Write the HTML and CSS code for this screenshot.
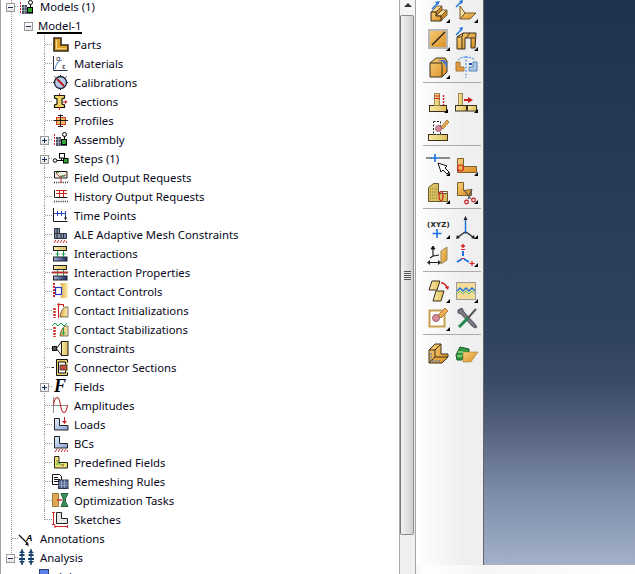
FILE: index.html
```html
<!DOCTYPE html>
<html lang="en">
<head>
<meta charset="utf-8">
<title>Model tree</title>
<link rel="stylesheet" href="styles.css">
</head>
<body>
<svg class="defs" aria-hidden="true">
<defs>
<linearGradient id="gold" x1="0" y1="0" x2="1" y2="1"><stop offset="0" stop-color="#f7cf7a"/><stop offset="1" stop-color="#d98c20"/></linearGradient>
<linearGradient id="yel" x1="0" y1="0" x2="1" y2="0"><stop offset="0" stop-color="#f8e9a8"/><stop offset="1" stop-color="#e0bf58"/></linearGradient>
<linearGradient id="fade" x1="0" y1="0" x2="1" y2="0"><stop offset="0" stop-color="#e0a83a"/><stop offset="1" stop-color="#fbefb8"/></linearGradient>
<linearGradient id="blu" x1="0" y1="0" x2="1" y2="1"><stop offset="0" stop-color="#e6eefa"/><stop offset="1" stop-color="#86a2d6"/></linearGradient>
<linearGradient id="navy" x1="0" y1="0" x2="1" y2="0"><stop offset="0" stop-color="#a8b4d8"/><stop offset="1" stop-color="#1c2a6c"/></linearGradient>
<symbol id="asm" viewBox="0 0 15 14"><path d="M1.500 2v12" stroke="#d02020" stroke-dasharray="2 1" fill="none"/><path d="M3 5h5v4h6v5H3z" fill="#4c5466"/><path d="M3 7.500h5M3 10.500h11M5.500 5v9M8 9v5" stroke="#a8b0c0" fill="none" stroke-width=".7"/><rect x="8.500" y="7.500" width="5" height="5" fill="#2fa52f" stroke="#000"/><circle cx="11.500" cy="2.500" r="2" fill="#fff" stroke="#000"/><path d="M11.500 4.500v3" stroke="#000"/></symbol>
<symbol id="hatch" viewBox="0 0 14 3"><path d="M1 3l2-3M4 3l2-3M7 3l2-3M10 3l2-3M13 3l1-2" stroke="#d02828" fill="none"/></symbol>
</defs>
</svg>
<div class="app">
  <div class="tree-side">
    <ul class="tree">
      <li class="n0">
        <div class="row l0"><span class="exp minus"></span><svg class="ti" viewBox="18 -3 18 19"><use href="#asm" x="19" y="0" width="15" height="14"/></svg><span>Models (1)</span></div>
        <ul>
          <li class="n1">
            <div class="row l1"><span class="exp minus"></span><span class="cur">Model-1</span></div>
            <ul>
              <li class="n2"><div class="row l2"><span class="exp none"></span><svg class="ti" viewBox="52 35 18 19"><path d="M54 38h7v7h7v6H54z" fill="#e2a02c" stroke="#33291a" stroke-width="1.600"/><path d="M56.500 40v8.500h9.500" stroke="#f8d688" fill="none"/></svg><span>Parts</span></div></li>
              <li class="n2"><div class="row l2"><span class="exp none"></span><svg class="ti" viewBox="52 54 18 19"><path d="M53.500 56v14.500h14" stroke="#26304a" fill="none"/><path d="M55 69c1-5 3-8 7-9" stroke="#3a70c8" fill="none"/><text x="56" y="61" class="sym">σ</text><text x="62" y="69" class="sym">ε</text></svg><span>Materials</span></div></li>
              <li class="n2"><div class="row l2"><span class="exp none"></span><svg class="ti" viewBox="52 73 18 19"><circle cx="60.500" cy="82.500" r="6" fill="#b9cdea" stroke="#1c2436" stroke-width="1.300"/><path d="M57 79l7 7" stroke="#b81818" stroke-width="2"/><path d="M54 82.500h-1M68 82.500h-1M60.500 76v-1M60.500 90v-1M55.500 77.500l-1-1M65.500 77.500l1-1" stroke="#000"/></svg><span>Calibrations</span></div></li>
              <li class="n2"><div class="row l2"><span class="exp none"></span><svg class="ti" viewBox="52 92 18 19"><path d="M54.500 95.500h10v2.500l-2.500 1v5l2.500 1v2.500h-10v-2.500l2.500-1v-5l-2.500-1z" fill="#f0d468" stroke="#1c1810" stroke-width="1.200"/><path d="M59.500 93v2M59.500 107v3M63 102h3" stroke="#d02020"/><path d="M65 100l2.500 2-2.500 2z" fill="#d02020"/></svg><span>Sections</span></div></li>
              <li class="n2"><div class="row l2"><span class="exp none"></span><svg class="ti" viewBox="52 111 18 19"><rect x="56.500" y="117.500" width="9" height="7" fill="#f0b860" stroke="#c84020"/><path d="M53.500 120.500h14.500M60.500 114.500v12.500M58 115.500h5M58 126.500h5" stroke="#1c1c1c" fill="none"/></svg><span>Profiles</span></div></li>
              <li class="n2"><div class="row l2"><span class="exp plus"></span><svg class="ti" viewBox="52 130 18 19"><use href="#asm" x="53" y="132" width="15" height="14"/></svg><span>Assembly</span></div></li>
              <li class="n2"><div class="row l2"><span class="exp plus"></span><svg class="ti" viewBox="52 149 18 19"><circle cx="55" cy="160.500" r="1.800" fill="#fff" stroke="#000"/><rect x="59.500" y="153.500" width="5" height="4.500" fill="#fff" stroke="#000"/><rect x="63.500" y="158.500" width="4.500" height="4.500" fill="#2fa52f" stroke="#000"/><path d="M57 160.500h6.500M61.500 158v2.500" stroke="#000"/></svg><span>Steps (1)</span></div></li>
              <li class="n2"><div class="row l2"><span class="exp none"></span><svg class="ti" viewBox="52 168 18 19"><path d="M54.500 171.500h12.500v6.500h-12.500z" fill="#f4f0e4" stroke="#1c1c1c"/><path d="M56 173l4 4 6-2" stroke="#c03030" fill="none"/><path d="M56 172.500h3M60 176h5" stroke="#30a040"/><path d="M54 182.500h14" stroke="#222" stroke-dasharray="1 1.200" stroke-width="1.400"/><path d="M61 178v5" stroke="#d02020"/></svg><span>Field Output Requests</span></div></li>
              <li class="n2"><div class="row l2"><span class="exp none"></span><svg class="ti" viewBox="52 187 18 19"><path d="M54.500 190v7.500h13" stroke="#1c1c1c" fill="none"/><path d="M56 193.500h11M59.500 190v7M63.500 190v7M56 190.500h11" stroke="#d02020" fill="none"/><path d="M54 201.500h14" stroke="#222" stroke-dasharray="1 1.200" stroke-width="1.400"/></svg><span>History Output Requests</span></div></li>
              <li class="n2"><div class="row l2"><span class="exp none"></span><svg class="ti" viewBox="52 206 18 19"><path d="M53.500 208v13.500h14" stroke="#1c1c1c" fill="none"/><path d="M54 213.500h12M57.500 211v5M61.500 211v5M65.500 211v5" stroke="#2846b8" fill="none"/><path d="M65.500 216v4M64 218h3" stroke="#222"/></svg><span>Time Points</span></div></li>
              <li class="n2"><div class="row l2"><span class="exp none"></span><svg class="ti" viewBox="52 225 18 19"><path d="M54.500 228.500h5v5h7v5h-12z" fill="#7f8da8" stroke="#2c3240"/><path d="M54.500 233.500h5M57 228v10M61 234v4M63.500 234v4" stroke="#2c3240" fill="none"/><use href="#hatch" x="53" y="240" width="14" height="3"/></svg><span>ALE Adaptive Mesh Constraints</span></div></li>
              <li class="n2"><div class="row l2"><span class="exp none"></span><svg class="ti" viewBox="52 244 18 19"><rect x="53.500" y="246.500" width="13" height="4" fill="url(#yel)" stroke="#222"/><rect x="53.500" y="257" width="13.500" height="4" fill="url(#navy)" stroke="#222"/><path d="M57.500 251v6M63.500 251v6M55.500 254h4M61.500 254h4" stroke="#18a050" fill="none"/></svg><span>Interactions</span></div></li>
              <li class="n2"><div class="row l2"><span class="exp none"></span><svg class="ti" viewBox="52 263 18 19"><rect x="53.500" y="265.500" width="13" height="4" fill="url(#yel)" stroke="#222"/><rect x="53.500" y="276" width="13.500" height="4" fill="url(#navy)" stroke="#222"/><path d="M57.500 270v6M63.500 270v6" stroke="#18a050" fill="none"/><path d="M52 272.500h16" stroke="#b83030" stroke-width="2"/></svg><span>Interaction Properties</span></div></li>
              <li class="n2"><div class="row l2"><span class="exp none"></span><svg class="ti" viewBox="52 282 18 19"><path d="M60 298c3-4 3-10 0-15h8v15z" fill="url(#fade)"/><rect x="55.500" y="287.500" width="6" height="7" fill="none" stroke="#2838c8" stroke-width="1.200"/><path d="M54 283v15" stroke="#d02828" stroke-dasharray="2 1" stroke-width="2"/></svg><span>Contact Controls</span></div></li>
              <li class="n2"><div class="row l2"><span class="exp none"></span><svg class="ti" viewBox="52 301 18 19"><path d="M60 317c0-4 2-8 5-10h3v10z" fill="url(#fade)" stroke="#222" stroke-width=".6"/><path d="M54.500 308v10" stroke="#d02828" stroke-dasharray="2 1" stroke-width="2.400"/><path d="M57.500 304.500h6M63.500 304v3M59.500 303l-2 1.500 2 1.500M58.500 305v13" stroke="#d02020" fill="none"/></svg><span>Contact Initializations</span></div></li>
              <li class="n2"><div class="row l2"><span class="exp none"></span><svg class="ti" viewBox="52 320 18 19"><path d="M60 336c0-4 2-8 5-10h3v10z" fill="url(#fade)" stroke="#222" stroke-width=".6"/><path d="M54.500 327v10" stroke="#d02828" stroke-dasharray="2 1" stroke-width="2.400"/><path d="M52 326l3-3 3 3 3-3 3 3 3-3" stroke="#18a050" fill="none"/><path d="M63.500 328v7M61.500 333h4" stroke="#18a050" fill="none"/></svg><span>Contact Stabilizations</span></div></li>
              <li class="n2"><div class="row l2"><span class="exp none"></span><svg class="ti" viewBox="52 339 18 19"><rect x="61.500" y="341.500" width="6.500" height="14" fill="url(#yel)" stroke="#222"/><rect x="52.500" y="346.500" width="4" height="4" fill="#555" stroke="#111"/><path d="M56.500 348.500l5-7M56.500 348.500l5 7" stroke="#222" fill="none"/></svg><span>Constraints</span></div></li>
              <li class="n2"><div class="row l2"><span class="exp none"></span><svg class="ti" viewBox="52 358 18 19"><path d="M67.500 362.500v-3h-11v16h11v-3" fill="#e8d070" stroke="#111"/><path d="M65.500 364.500v-2.500h-7v11h7v-2.500" fill="#fff" stroke="#111"/><rect x="60" y="365" width="7" height="5" fill="#c05040" stroke="#222" stroke-width=".7"/><path d="M54 367.500h-2" stroke="#222"/></svg><span>Connector Sections</span></div></li>
              <li class="n2"><div class="row l2"><span class="exp plus"></span><svg class="ti" viewBox="52 377 18 19"><text x="54" y="392" class="ff">F</text></svg><span>Fields</span></div></li>
              <li class="n2"><div class="row l2"><span class="exp none"></span><svg class="ti" viewBox="52 396 18 19"><path d="M53.500 397v16M52 405.500h16" stroke="#8a8a8a" fill="none"/><path d="M53.500 405c1.500-10 5.500-10 7 0s5.500 10 7 0" stroke="#b82828" fill="none" stroke-width="1.100"/></svg><span>Amplitudes</span></div></li>
              <li class="n2"><div class="row l2"><span class="exp none"></span><svg class="ti" viewBox="52 415 18 19"><path d="M54.500 418.500h5v7h8.500v4.500h-13.500z" fill="url(#blu)" stroke="#222"/><path d="M64.500 417v6" stroke="#c82020"/><path d="M62 421h5l-2.500 3z" fill="#c82020"/></svg><span>Loads</span></div></li>
              <li class="n2"><div class="row l2"><span class="exp none"></span><svg class="ti" viewBox="52 434 18 19"><path d="M54.500 436.500h5v7h8v4.500h-13z" fill="url(#blu)" stroke="#222"/><use href="#hatch" x="54" y="449" width="14" height="3"/></svg><span>BCs</span></div></li>
              <li class="n2"><div class="row l2"><span class="exp none"></span><svg class="ti" viewBox="52 453 18 19"><path d="M54.500 456.500h4.500v6h8.500v5.500h-13z" fill="#f0e070" stroke="#222"/><path d="M56 460l4 4 4 2M56 464h3" stroke="#38a848" fill="none"/><path d="M62 465h2M57 462h1" stroke="#d04030"/></svg><span>Predefined Fields</span></div></li>
              <li class="n2"><div class="row l2"><span class="exp none"></span><svg class="ti" viewBox="52 472 18 19"><path d="M52.500 474.500h7l2 2v8h-9z" fill="#fff" stroke="#111"/><path d="M54 477.500h4M54 479.500h6M54 481.500h6" stroke="#111"/><rect x="58.500" y="480" width="9.500" height="8.500" fill="#54648c" stroke="#2c3650"/><path d="M61.500 480v8M64.500 480v8M58.500 483h9.500M58.500 485.500h9.500" stroke="#a8b4d0" stroke-width=".7"/></svg><span>Remeshing Rules</span></div></li>
              <li class="n2"><div class="row l2"><span class="exp none"></span><svg class="ti" viewBox="52 491 18 19"><rect x="52.500" y="493.500" width="6" height="13" fill="#e0a850" stroke="#a08040"/><path d="M61 493.500h7l-2.500 5v3l2.500 5h-7l2-5v-3z" fill="#3a9058" stroke="#286040"/><path d="M57 500h5" stroke="#d02020" stroke-width="1.400"/></svg><span>Optimization Tasks</span></div></li>
              <li class="n2"><div class="row l2"><span class="exp none"></span><svg class="ti" viewBox="52 510 18 19"><path d="M56.500 512.500h5v6h6v5h-11z" fill="#e8e8e8" stroke="#222"/><path d="M53.500 512v13M52 512.500h3M52 524.500h3M55 526.500h12M55 525v3M67.500 525v3" stroke="#d02020" fill="none"/></svg><span>Sketches</span></div></li>
            </ul>
          </li>
        </ul>
      </li>
      <li class="n0"><div class="row l0"><span class="exp none"></span><svg class="ti" viewBox="18 529 18 19"><path d="M19 535l9 9" stroke="#111" stroke-width="1.200"/><path d="M29 546l-4-1.500 2.500-2.500z" fill="#111"/><text x="26" y="541" class="aa">A</text></svg><span>Annotations</span></div></li>
      <li class="n0">
        <div class="row l0"><span class="exp minus"></span><svg class="ti" viewBox="18 548 18 19"><path d="M22 549v16M31 549v16" stroke="#14406c" fill="none" stroke-width="1.400"/><path d="M19 553h6l-3-3zM28 553h6l-3-3zM19.500 554h5v2h-5zM28.500 554h5v2h-5zM19 558h6v2h-6zM28 558h6v2h-6zM19 561h6l-3 3zM28 561h6l-3 3z" fill="#14406c"/></svg><span>Analysis</span></div>
        <ul>
          <li class="n3"><div class="row l3"><svg class="ti" viewBox="37 567 18 19"><rect x="39.500" y="569.500" width="9" height="10" fill="#5a80e4" stroke="#2c3e78"/></svg><span>Jobs</span></div></li>
        </ul>
      </li>
    </ul>
    <div class="scrollbar">
      <div class="sb-up"><span class="arrow"></span></div>
      <div class="thumb"><span class="grip"></span></div>
    </div>
  </div>
  <div class="work">
    <div class="work-main">
      <div class="tools">
        <div class="group">
          <svg class="tool" viewBox="423 -5 28 28"><path d="M431 12l6-6h5l-6 6zM436 16l6-6h5l-6 6z" fill="#f6d890" stroke="#5a4624" stroke-width=".8"/><path d="M436 12l6-6v4l-6 6zM441 16l6-6v5l-6 6z" fill="#c88a2c" stroke="#5a4624" stroke-width=".8"/><path d="M431 12h5v4h5v5h-10z" fill="url(#gold)" stroke="#3a2c14"/><path d="M432 9l6-6" stroke="#1a70d8" stroke-width="1.500"/><path d="M440 1l-5 1 3 3z" fill="#1a70d8"/><path class="tri" d="M450 19v4h-4z"/></svg>
          <svg class="tool" viewBox="451 -5 28 28"><path d="M465 13h11l-6 6h-10z" fill="url(#gold)" stroke="#7a5a28"/><path d="M460 6l5 7-5 6z" fill="#f8e0a8" stroke="#7a5a28"/><path d="M456 7l5-5" stroke="#1a70d8" stroke-width="1.500"/><path d="M463 0l-4 1 3 3z" fill="#1a70d8"/><path class="tri" d="M478 19v4h-4z"/></svg>
          <svg class="tool" viewBox="423 23 28 28"><rect x="429" y="30" width="18" height="18" fill="url(#gold)" stroke="#b8b8b8" stroke-width="2"/><path d="M432 45l13-13" stroke="#1c1c1c" stroke-width="1.200"/><path class="tri" d="M450 47v4h-4z"/></svg>
          <svg class="tool" viewBox="451 23 28 28"><path d="M457 37l6-4h13l-1 15h-4v-10h-6v11h-8z" fill="url(#gold)" stroke="#3a3020"/><path d="M462 38v11M471 38h4M457 37h5l1-4M466 38l4-5" fill="none" stroke="#3a3020"/><path d="M456 35l5-5" stroke="#1a70d8" stroke-width="1.500"/><path d="M463 27l-4 1 3 3z" fill="#1a70d8"/><path class="tri" d="M478 47v4h-4z"/></svg>
          <svg class="tool" viewBox="423 51 28 28"><path d="M430 63l6-5h9l2 3v11l-5 5h-12z" fill="url(#gold)" stroke="#3a3020"/><path d="M430 63h12v14" fill="none" stroke="#3a3020"/><path d="M437 60h8l2 3v7c-1-6-4-9-10-10z" fill="#4a78c8"/><path class="tri" d="M450 75v4h-4z"/></svg>
          <svg class="tool" viewBox="451 51 28 28"><path d="M456 62h4v5h4v4h-8z" fill="#e09a40" stroke="#a07838"/><path d="M477 62h-4v5h-4v4h8z" fill="#a8c8e8" stroke="#5a88b8"/><path d="M466 56v22" stroke="#2a80e8" stroke-dasharray="2 1.500"/><path d="M458 60c4-4 12-4 17 0" stroke="#2a80e8" fill="none" stroke-dasharray="2 1"/><rect x="469" y="63" width="3" height="2" fill="#1a50c0"/></svg>
        </div>
        <div class="group">
          <svg class="tool" viewBox="423 86 28 28"><rect x="429.500" y="105.500" width="17" height="6" fill="url(#yel)" stroke="#3a3020"/><rect x="434.500" y="93.500" width="5" height="12" fill="url(#yel)" stroke="#9a8a50"/><path d="M434 96h6M434 98.500h6" stroke="#d02020"/><path d="M443.500 95v10" stroke="#d02020" stroke-dasharray="2 1" stroke-width="1.400"/><path class="tri" d="M448 109v4h-4z"/></svg>
          <svg class="tool" viewBox="451 86 28 28"><rect x="458.500" y="93.500" width="4" height="12" fill="url(#yel)" stroke="#9a8a50"/><rect x="455.500" y="105.500" width="11" height="5.500" fill="url(#yel)" stroke="#3a3020"/><rect x="467.500" y="105.500" width="9" height="5.500" fill="url(#yel)" stroke="#3a3020"/><path d="M464 100h5" stroke="#d02020" stroke-width="2"/><path d="M468 97l5 3-5 3z" fill="#d02020"/><path class="tri" d="M478 109v4h-4z"/></svg>
          <svg class="tool" viewBox="423 114 28 28"><rect x="428.500" y="134.500" width="19" height="6" fill="url(#yel)" stroke="#3a3020"/><rect x="433.500" y="121.500" width="7" height="13" fill="#fff" stroke="#222" stroke-dasharray="2 1.500"/><path d="M441 127l6-7 2 2-6 7z" fill="#eeaa50" stroke="#a88040"/><circle cx="438.500" cy="128.500" r="3" fill="#d88a9a" stroke="#a06070"/></svg>
          <span class="tool"></span>
        </div>
        <div class="group">
          <svg class="tool" viewBox="423 149 28 28"><path d="M426 158h6M439 158h11" stroke="#222" stroke-width="1.200"/><path d="M435 154v8M431 158h8" stroke="#1a70e0" stroke-width="1.600"/><path d="M438 163l3 9 2-2 4 4 2-2-4-4 2-2z" fill="#fff" stroke="#111"/><path class="tri" d="M450 172v4h-4z"/></svg>
          <svg class="tool" viewBox="451 149 28 28"><path d="M457.500 158.500h6v8h13v6h-19z" fill="url(#gold)" stroke="#7a6030"/><circle cx="460.500" cy="168" r="3" fill="none" stroke="#d02020" stroke-width="1.200"/><path class="tri" d="M478 172v4h-4z"/></svg>
          <svg class="tool" viewBox="423 177 28 28"><path d="M428.500 187.500l5-4h5v10h9v8h-19z" fill="#d8c060" stroke="#6a5a30"/><path d="M430 189h7M430 192h7M430 195h7M430 198h7" stroke="#8a7a40" stroke-dasharray="1 1"/><path d="M438.500 193.500l3-2h6v2" fill="none" stroke="#6a5a30"/><ellipse cx="441" cy="196" rx="2" ry="4.500" fill="none" stroke="#d02020" stroke-width="1.200"/><path class="tri" d="M450 200v4h-4z"/></svg>
          <svg class="tool" viewBox="451 177 28 28"><path d="M457.500 182.500h6v8l8-1v6h-14z" fill="url(#gold)" stroke="#7a6030"/><path d="M464 190l7 9M472 189l-4 10" stroke="#555" stroke-width="1.200"/><circle cx="466.500" cy="202" r="1.800" fill="none" stroke="#c81818" stroke-width="1.200"/><circle cx="473.500" cy="200" r="1.800" fill="none" stroke="#c81818" stroke-width="1.200"/><path class="tri" d="M478 200v4h-4z"/></svg>
        </div>
        <div class="group">
          <svg class="tool" viewBox="423 212 28 28"><text x="427" y="227" class="xyz">(XYZ)</text><path d="M437 229v9M432.500 233.500h9" stroke="#1a70e0" stroke-width="1.600"/><path class="tri" d="M450 235v4h-4z"/></svg>
          <svg class="tool" viewBox="451 212 28 28"><path d="M465.500 220v14" stroke="#1a70e0" stroke-width="1.400"/><path d="M465.500 216l-2 4h4z" fill="#222"/><path d="M465 232l-7 5M466 232l7 5" stroke="#2a2a2a" stroke-width="1.400"/><path d="M456 239l1-4 3 3zM475 239l-1-4-3 3z" fill="#222"/><path class="tri" d="M478 235v4h-4z"/></svg>
          <svg class="tool" viewBox="423 240 28 28"><path d="M441 251l6-4v13l-6 4z" fill="url(#gold)" stroke="#9a8a60"/><path d="M433 249v7l6-1M433 256l-3 2" stroke="#222" fill="none" stroke-width="1.200"/><path d="M431 249h4l-2-3zM428 262.500h12" stroke="#222"/><path d="M430 260l-3 2.500 3 2.500zM438 260l3 2.500-3 2.500z" fill="#222"/></svg>
          <svg class="tool" viewBox="451 240 28 28"><path d="M463 244v4M461 246h4" stroke="#d82020" stroke-width="1.400"/><path d="M461 249h4v1h-4zM461 258h4v1h-4z" fill="#d82020"/><path d="M463 251v5" stroke="#1a70e0" stroke-width="2"/><path d="M462 259l-5 3M464 259l5 3" stroke="#1a70e0" stroke-width="1.800"/><path d="M472 261v5M469.500 263.500h5" stroke="#d82020" stroke-width="1.200"/><path class="tri" d="M478 263v4h-4z"/></svg>
        </div>
        <div class="group">
          <svg class="tool" viewBox="423 275 28 28"><path d="M432 281h8l-3 9h-8z" fill="url(#yel)" stroke="#3a3020"/><path d="M436 291h8l-3 10h-8z" fill="url(#yel)" stroke="#3a3020"/><path d="M441 283c3 0 5 1 6 5" stroke="#d02020" fill="none" stroke-width="1.500"/><path d="M445 287l3 3 1-4z" fill="#d02020"/><path class="tri" d="M450 299v4h-4z"/></svg>
          <svg class="tool" viewBox="451 275 28 28"><rect x="456.500" y="282.500" width="19" height="17" fill="#f4dc98" stroke="#9a9a9a"/><path d="M457 291l3-3 3 3 3-3 3 3 3-3 3 3" stroke="#1a70e0" fill="none" stroke-width="1.400"/><path d="M457 294l3-3 3 3 3-3 3 3 3-3 3 3" stroke="#38a858" fill="none" opacity=".7"/><path class="tri" d="M478 299v4h-4z"/></svg>
          <svg class="tool" viewBox="423 303 28 28"><rect x="429.500" y="310.500" width="15" height="16" fill="#fff" stroke="#c8a050" stroke-width="2"/><path d="M438 315l7-7 3 3-7 7z" fill="#eeaa50" stroke="#a88040"/><circle cx="436" cy="318" r="3.500" fill="#d88a9a" stroke="#a06070"/><path class="tri" d="M450 327v4h-4z"/></svg>
          <svg class="tool" viewBox="451 303 28 28"><path d="M458 310l4-2 2 4 11 12 2 3-2 1-3-2-11-12-3-1z" fill="#7a7a82" stroke="#2a2a30" stroke-width=".7"/><path d="M476 309l-8 9" stroke="#555" stroke-width="2"/><path d="M468 318l-9 9" stroke="#1f8850" stroke-width="3"/></svg>
        </div>
        <div class="group">
          <svg class="tool" viewBox="423 338 28 28"><path d="M429 350l6-6h6v10h7v3l-6 6h-13z" fill="url(#gold)" stroke="#3a3020"/><path d="M429 350h6v7h13M435 350l6-6M435 357l-6 6" fill="none" stroke="#3a3020"/><path d="M431 353v8h10" fill="none" stroke="#3a70c8" stroke-dasharray="2 1"/></svg>
          <svg class="tool" viewBox="451 338 28 28"><path d="M456 355l4-8 9 2v3l-5 1-2 7h-5z" fill="#2f9a3f" stroke="#1a5a26"/><path d="M463 352h15l-5 7-2 3h-8z" fill="url(#gold)" stroke="#a08040" stroke-width=".6"/><path d="M458 352h5M457 356h5" stroke="#d8e8b0"/></svg>
          <span class="tool"></span>
        </div>
      </div>
      <div class="viewport"></div>
    </div>
    <div class="strip"></div>
  </div>
</div>
</body>
</html>
```

FILE: styles.css
```css
* { box-sizing: border-box; }
html, body { margin: 0; padding: 0; height: 574px; overflow: hidden; background: #fff; }
body { font: 11.300px "Noto Sans", "Liberation Sans", sans-serif; color: #08081a; }
.defs { position: absolute; width: 0; height: 0; }
.app { display: flex; height: 574px; }

.tree-side { display: flex; width: 416px; height: 574px; border-right: 1px solid #a4a4a4; flex: none; }
.tree, .tree ul { list-style: none; margin: 0; padding: 0; }
.tree { flex: 1; height: 574px; overflow: hidden; box-shadow: inset 1px 0 #a0a0a0; }
.tree > li:first-child { margin-top: -3px; }
.tree li { position: relative; }
.tree li::before, .tree li::after { content: ""; position: absolute; }
.n0::before { left: 11px; top: 0; bottom: 0; border-left: 1px dotted #999; }
.n0::after { left: 12px; top: 9px; width: 6px; border-top: 1px dotted #999; }
.n0:last-child::before { bottom: auto; height: 9px; }
.n2::before { left: 44px; top: 0; bottom: 0; border-left: 1px dotted #999; }
.n2::after { left: 45px; top: 9px; width: 7px; border-top: 1px dotted #999; }
.n2:last-child::before { bottom: auto; height: 10px; }

.row { position: relative; z-index: 1; display: flex; align-items: center; gap: 3px; height: 19px; white-space: nowrap; }
.ti + span { margin-left: 1px; }
.l0 { padding-left: 6px; }
.l1 { padding-left: 24px; }
.l2 { padding-left: 40px; }
.l3 { padding-left: 37px; }
.ti { width: 18px; height: 19px; flex: none; }
.exp { position: relative; width: 9px; height: 9px; flex: none; margin-top: 1px; border: 1px solid #9a9a9a; background: linear-gradient(#fff, #e4e4e4); }
.exp.none { visibility: hidden; }
.exp::before { content: ""; position: absolute; left: 1px; top: 3px; width: 5px; height: 1px; background: #1c2c5c; }
.exp.plus::after { content: ""; position: absolute; left: 3px; top: 1px; width: 1px; height: 5px; background: #1c2c5c; }
.cur { margin-left: 1px; padding: 0 1px; height: 15px; line-height: 14px; margin-top: 2px; border-bottom: 2px solid #000; }
.sym { font: 7px "DejaVu Sans", sans-serif; fill: #222; }
.ff { font: italic bold 18px "Liberation Serif", serif; fill: #000; }
.aa { font: italic bold 9px "Liberation Sans", sans-serif; fill: #000; }
.xyz { font: bold 7px "DejaVu Sans", sans-serif; letter-spacing: .2px; fill: #222; }
.tri { fill: #000; }

.scrollbar { width: 16px; flex: none; height: 574px; background: #efefef; border-left: 1px solid #a8a8a8; }
.sb-up { display: flex; justify-content: center; padding-top: 3px; height: 15px; background: #f4f4f4; }
.arrow { width: 0; height: 0; border: 4px solid transparent; border-top: 0; border-bottom: 4px solid #333; }
.thumb { display: flex; align-items: center; justify-content: center; height: 520px; margin-right: 1px; border: 1px solid #8c8c8c; border-left-color: #777; border-radius: 2px; background: linear-gradient(90deg, #f2f2f2, #e4e4e4 45%, #cfcfcf); }
.grip { width: 7px; height: 9px; background: repeating-linear-gradient(#555 0 1px, #e8e8e8 1px 2px); }

.work { flex: 1; display: flex; flex-direction: column; min-width: 0; }
.work-main { display: flex; height: 565px; }
.tools { width: 68px; flex: none; padding-left: 7px; overflow: hidden; background: linear-gradient(90deg, #fff, #efefef 70%); border-right: 1px solid #666; }
.group { display: grid; grid-template-columns: 28px 28px; grid-auto-rows: 28px; width: 58px; padding: 3px 0; border-bottom: 1px solid #ababab; }
.group:first-child { margin-top: -8px; }
.group:last-child { border-bottom: 0; }
.tool { display: block; width: 28px; height: 28px; }
.viewport { flex: 1; border-bottom: 1px solid #b0b0b0; background: linear-gradient(#1f3350 0, #2f425f 60%, #3a4b68 68%, #54627e 76%, #7f8ea9 88%, #a2b0c9 100%); }
.strip { flex: 1; background: linear-gradient(90deg, #f4f4f4, #fff 4%, #f6f6f6 30%, #fff); }
```
